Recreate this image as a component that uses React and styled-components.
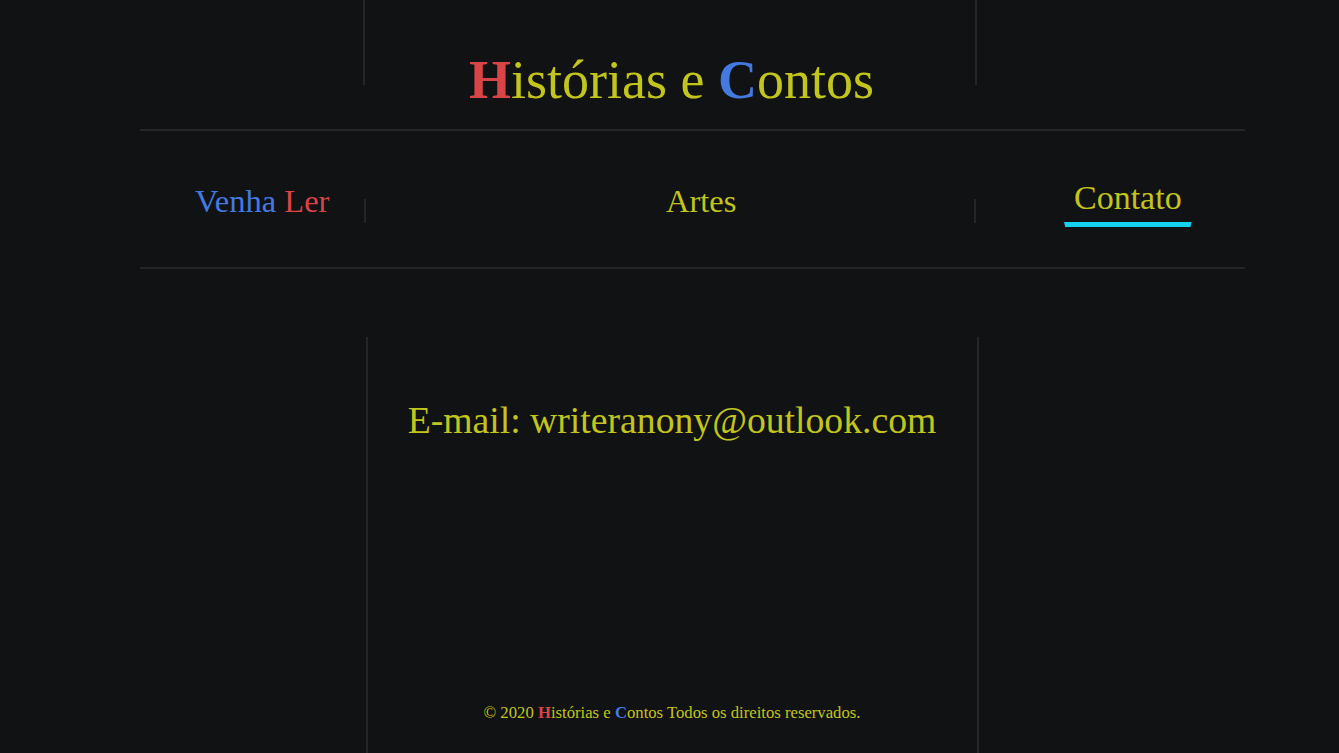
import React from "react";
import styled, { createGlobalStyle } from "styled-components";

const bg = "#111214";
const rule = "#25262a";
const lime = "#c1c51c";
const red = "#d94447";
const blue = "#4479e0";
const cyan = "#14d2ef";

const GlobalStyle = createGlobalStyle`
  html, body {
    margin: 0;
    padding: 0;
    background: ${bg};
  }
  body {
    font-family: "Liberation Serif", "Times New Roman", serif;
    color: ${lime};
    overflow: hidden;
  }
  * {
    box-sizing: border-box;
  }
`;

const Page = styled.div`
  min-height: 100vh;
  display: flex;
  flex-direction: column;
`;

const Header = styled.header`
  display: flex;
  justify-content: center;
  height: 129px;
`;

const HeaderColumn = styled.div`
  width: 614px;
  padding-top: 53px;
  text-align: center;
  background:
    linear-gradient(${rule}, ${rule}) left top / 2px 85px no-repeat,
    linear-gradient(${rule}, ${rule}) right top / 2px 85px no-repeat;
`;

const Title = styled.h1`
  margin: 0 0 0 4px;
  font-size: 54px;
  font-weight: normal;
  line-height: 1;
  color: ${lime};
`;

const Mark = styled.span`
  color: ${(p) => (p.$tone === "red" ? red : p.$tone === "blue" ? blue : lime)};
  font-weight: ${(p) => (p.$bold ? "bold" : "normal")};
`;

const Nav = styled.nav`
  width: 1105px;
  margin-left: 140px;
  height: 140px;
  border-top: 2px solid ${rule};
  border-bottom: 2px solid ${rule};
  display: grid;
  grid-template-columns: 224px 612px 269px;
`;

const NavCell = styled.div`
  padding-top: 54px;
  padding-left: ${(p) => p.$pad}px;
  ${(p) =>
    p.$divided &&
    `background:
      linear-gradient(${rule}, ${rule}) left 68px / 2px 24px no-repeat,
      linear-gradient(${rule}, ${rule}) right 68px / 2px 24px no-repeat;`}
`;

const NavLink = styled.a`
  display: inline-block;
  font-size: ${(p) => (p.$active ? 34 : 32.5)}px;
  line-height: 1;
  color: ${lime};
  text-decoration: none;
  margin-top: ${(p) => (p.$active ? -4 : 0)}px;
  padding: 0 ${(p) => (p.$active ? 10 : 0)}px;
  cursor: pointer;

  &::after {
    content: "";
    display: ${(p) => (p.$active ? "block" : "none")};
    height: 5px;
    margin: 7px -10px 0;
    background: ${cyan};
    clip-path: polygon(0 0, 100% 0, 99% 100%, 1% 100%);
  }
`;

const Main = styled.main`
  flex: 1;
  display: flex;
  justify-content: center;
  padding-top: 68px;
`;

const ContentColumn = styled.section`
  width: 613px;
  margin-left: 5px;
  border-left: 2px solid ${rule};
  border-right: 2px solid ${rule};
  padding-top: 65px;
  display: flex;
  flex-direction: column;
  align-items: center;
`;

const Email = styled.p`
  margin: 0;
  font-size: 37.7px;
  line-height: 1;
  color: ${lime};
`;

const Footer = styled.footer`
  margin-top: 265px;
  font-size: 16.7px;
  line-height: 1;
  color: ${lime};
`;

export default function App() {
  return (
    <Page>
      <GlobalStyle />
      <Header>
        <HeaderColumn>
          <Title>
            <Mark $tone="red" $bold>H</Mark>istórias e{" "}
            <Mark $tone="blue" $bold>C</Mark>ontos
          </Title>
        </HeaderColumn>
      </Header>

      <Nav>
        <NavCell $pad={55}>
          <NavLink>
            <Mark $tone="blue">Venha</Mark> <Mark $tone="red">Ler</Mark>
          </NavLink>
        </NavCell>
        <NavCell $pad={302} $divided>
          <NavLink>Artes</NavLink>
        </NavCell>
        <NavCell $pad={88}>
          <NavLink $active>Contato</NavLink>
        </NavCell>
      </Nav>

      <Main>
        <ContentColumn>
          <Email>E-mail: writeranony@outlook.com</Email>
          <Footer>
            © 2020 <Mark $tone="red" $bold>H</Mark>istórias e{" "}
            <Mark $tone="blue" $bold>C</Mark>ontos Todos os direitos reservados.
          </Footer>
        </ContentColumn>
      </Main>
    </Page>
  );
}
